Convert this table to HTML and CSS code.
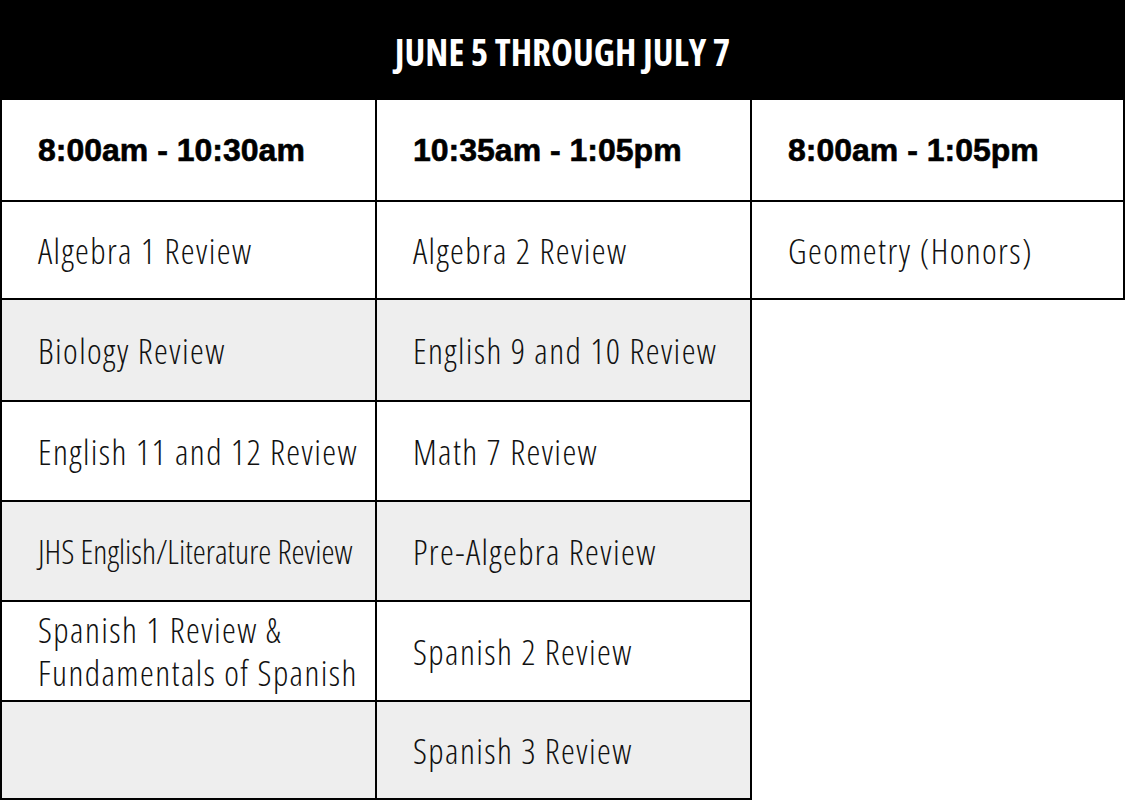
FILE: index.html
```html
<!DOCTYPE html>
<html lang="en">
<head>
<meta charset="utf-8">
<title>Summer Schedule</title>
<link rel="stylesheet" href="styles.css">
</head>
<body>
<div class="schedule">
  <div class="banner">JUNE 5 THROUGH JULY 7</div>
  <table class="grid">
    <colgroup>
      <col class="c1"><col class="c2"><col class="c3">
    </colgroup>
    <tbody>
      <tr class="r1 times">
        <td>8:00am - 10:30am</td>
        <td>10:35am - 1:05pm</td>
        <td>8:00am - 1:05pm</td>
      </tr>
      <tr class="r2">
        <td>Algebra 1 Review</td>
        <td>Algebra 2 Review</td>
        <td>Geometry (Honors)</td>
      </tr>
      <tr class="r3 shade">
        <td>Biology Review</td>
        <td>English 9 and 10 Review</td>
        <td class="blank"></td>
      </tr>
      <tr class="r4">
        <td>English 11 and 12 Review</td>
        <td>Math 7 Review</td>
        <td class="blank"></td>
      </tr>
      <tr class="r5 shade">
        <td class="tight">JHS English/Literature Review</td>
        <td>Pre-Algebra Review</td>
        <td class="blank"></td>
      </tr>
      <tr class="r6">
        <td>Spanish 1 Review &amp;<br>Fundamentals of Spanish</td>
        <td>Spanish 2 Review</td>
        <td class="blank"></td>
      </tr>
      <tr class="r7 shade">
        <td></td>
        <td>Spanish 3 Review</td>
        <td class="blank"></td>
      </tr>
    </tbody>
  </table>
</div>
</body>
</html>
```
FILE: styles.css
```css
html, body {
  margin: 0;
  padding: 0;
  background: #ffffff;
}

.schedule {
  width: 1125px;
  height: 800px;
  overflow: hidden;
}

.banner {
  height: 100px;
  background: #000000;
  color: #ffffff;
  display: flex;
  align-items: center;
  justify-content: center;
  font-family: "Open Sans", "DejaVu Sans Condensed", sans-serif;
  font-stretch: 75%;
  font-weight: 700;
  font-size: 37px;
  letter-spacing: 0;
  padding-top: 2px;
  box-sizing: border-box;
}

.grid {
  width: 1125px;
  border-collapse: separate;
  border-spacing: 0;
  table-layout: fixed;
}

.grid col.c1 { width: 377px; }
.grid col.c2 { width: 375px; }
.grid col.c3 { width: 373px; }

.grid td {
  box-sizing: border-box;
  padding: 0 0 0 36px;
  border-right: 2px solid #000000;
  border-bottom: 2px solid #000000;
  vertical-align: middle;
  font-family: "Open Sans", "DejaVu Sans Condensed", sans-serif;
  font-stretch: 75%;
  font-weight: 300;
  font-size: 35px;
  letter-spacing: 1.4px;
  line-height: 43px;
  color: #111111;
  white-space: nowrap;
}

.grid td:first-child {
  border-left: 2px solid #000000;
}

.grid td.tight {
  font-size: 33px;
  letter-spacing: 0;
}

.grid .times td {
  font-family: "Liberation Sans", Arial, sans-serif;
  font-stretch: normal;
  font-weight: 700;
  font-size: 32px;
  letter-spacing: 0;
  color: #000000;
  -webkit-text-stroke: 0.6px #000000;
}

.grid .shade td {
  background: #eeeeee;
}

.grid td.blank,
.grid .shade td.blank {
  background: #ffffff;
  border-right: none;
  border-bottom: none;
}

.grid .r1 td { height: 102px; }
.grid .r2 td { height: 98px; }
.grid .r3 td { height: 102px; }
.grid .r4 td { height: 100px; }
.grid .r5 td { height: 100px; }
.grid .r6 td { height: 100px; }
.grid .r7 td { height: 98px; }
```
